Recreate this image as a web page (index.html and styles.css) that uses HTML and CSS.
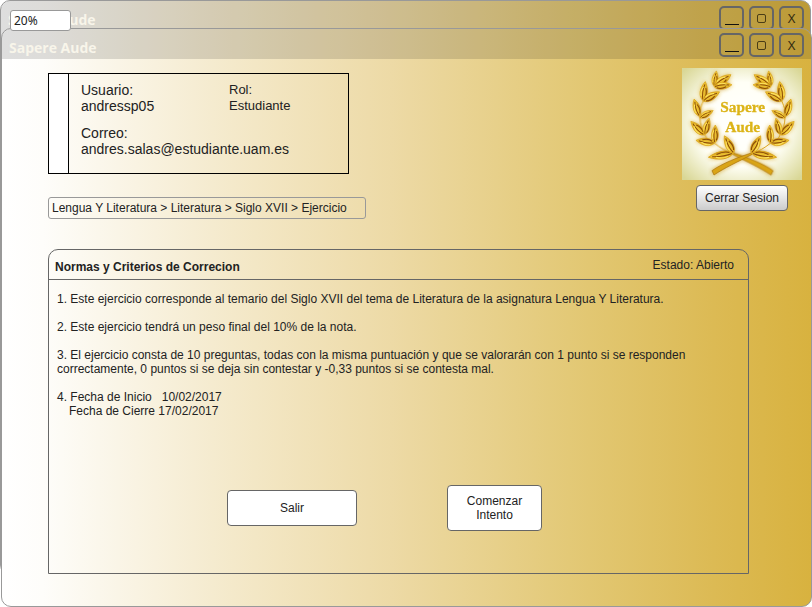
FILE: index.html
```html
<!DOCTYPE html>
<html lang="es">
<head>
<meta charset="utf-8">
<title>Sapere Aude</title>
<link rel="stylesheet" href="styles.css">
</head>
<body>
<div class="desktop">
  <div class="window window-back">
    <div class="titlebar">
      <span class="title">Sapere Aude</span>
      <div class="controls">
        <button type="button" aria-label="Minimizar"><span class="minimize"></span></button>
        <button type="button" aria-label="Maximizar"><span class="maximize"></span></button>
        <button type="button" aria-label="Cerrar">X</button>
      </div>
    </div>
  </div>

  <main class="window window-front">
    <div class="titlebar">
      <h1 class="title">Sapere Aude</h1>
      <div class="controls">
        <button type="button" aria-label="Minimizar"><span class="minimize"></span></button>
        <button type="button" aria-label="Maximizar"><span class="maximize"></span></button>
        <button type="button" aria-label="Cerrar">X</button>
      </div>
    </div>

    <div class="content">
      <header class="top">
        <div class="top-left">
          <section class="user-card">
            <div class="user-photo"></div>
            <div class="user-data">
              <p>Usuario:<br>andressp05</p>
              <p class="role">Rol:<br>Estudiante</p>
              <p class="mail">Correo:<br>andres.salas@estudiante.uam.es</p>
            </div>
          </section>
          <nav class="breadcrumb">Lengua Y Literatura &gt; Literatura &gt; Siglo XVII &gt; Ejercicio</nav>
        </div>
        <div class="top-right">
          <svg class="logo" viewBox="20 22 360 336" role="img" aria-label="Sapere Aude">
            <defs>
              <radialGradient id="glow" cx="50%" cy="50%" r="68%">
                <stop offset="0" stop-color="#ffffff"/>
                <stop offset=".55" stop-color="#fffff6"/>
                <stop offset=".8" stop-color="#eae9c0"/>
                <stop offset="1" stop-color="#d9d796"/>
              </radialGradient>
              <linearGradient id="gold" x1="0" y1="0" x2="1" y2="0">
                <stop offset="0" stop-color="#e3a916"/>
                <stop offset=".5" stop-color="#f2c936"/>
                <stop offset="1" stop-color="#c98f12"/>
              </linearGradient>
              <filter id="halo" x="-20%" y="-20%" width="140%" height="140%">
                <feGaussianBlur stdDeviation="6"/>
              </filter>
              <g id="leaf">
                <path d="M0 0C-14 -12 -14 -32 0 -54C13 -34 14 -12 0 0Z" fill="url(#gold)" stroke="#d9a31a" stroke-width="2"/>
                <path d="M0 -3C-4 -16 -4 -30 0 -46M4 -8C9 -16 8 -26 4 -36" fill="none" stroke="#8a4c08" stroke-width="3"/>
                <path d="M-6 -12C-9 -20 -8 -30 -3 -38" fill="none" stroke="#fbe364" stroke-width="3"/>
              </g>
              <g id="branch">
                <path d="M84 120C76 140 70 155 74 170C74 190 80 206 88 222C94 236 104 244 118 248C136 262 152 272 176 280" fill="none" stroke="#dba621" stroke-width="3"/>
                <path d="M172 276C215 290 262 308 293 330L287 343C258 323 215 303 174 282Z" fill="#d9a416" stroke="#a8700b" stroke-width="2"/>
                <use href="#leaf" transform="translate(116 76) rotate(9) scale(.85)"/>
                <use href="#leaf" transform="translate(118 76) rotate(55) scale(1.1)"/>
                <use href="#leaf" transform="translate(116 78) rotate(84)"/>
                <use href="#leaf" transform="translate(82 119) rotate(8) scale(1.05)"/>
                <use href="#leaf" transform="translate(83 121) rotate(61) scale(1.05)"/>
                <use href="#leaf" transform="translate(72 167) rotate(-17)"/>
                <use href="#leaf" transform="translate(73 171) rotate(62) scale(.85)"/>
                <use href="#leaf" transform="translate(86 223) rotate(-44) scale(1.05)"/>
                <use href="#leaf" transform="translate(88 222) rotate(15) scale(.95)"/>
                <use href="#leaf" transform="translate(118 247) rotate(-82) scale(1.05)"/>
                <use href="#leaf" transform="translate(118 247) rotate(2)"/>
                <use href="#leaf" transform="translate(174 278) rotate(-99) scale(1.1 1.4)"/>
                <use href="#leaf" transform="translate(175 278) rotate(-28) scale(1.1)"/>
              </g>
            </defs>
            <rect x="20" y="22" width="360" height="336" fill="url(#glow)"/>
            <g filter="url(#halo)" opacity=".8">
              <use href="#branch"/>
              <use href="#branch" transform="translate(403 0) scale(-1 1)"/>
            </g>
            <use href="#branch"/>
            <use href="#branch" transform="translate(403 0) scale(-1 1)"/>
            <text class="logo-text" x="202" y="154">Sapere</text>
            <text class="logo-text" x="202" y="215">Aude</text>
          </svg>
          <button type="button" class="logout">Cerrar Sesion</button>
        </div>
      </header>

      <section class="panel">
        <div class="panel-head">
          <h2>Normas y Criterios de Correcion</h2>
          <span class="state">Estado: Abierto</span>
        </div>
        <div class="rules">
          <p>1. Este ejercicio corresponde al temario del Siglo XVII del tema de Literatura de la asignatura Lengua Y Literatura.</p>
          <p>2. Este ejercicio tendrá un peso final del 10% de la nota.</p>
          <p>3. El ejercicio consta de 10 preguntas, todas con la misma puntuación y que se valorarán con 1 punto si se responden correctamente, 0 puntos si se deja sin contestar y -0,33 puntos si se contesta mal.</p>
          <p>4. Fecha de Inicio &nbsp; 10/02/2017<br><span class="indent">Fecha de Cierre 17/02/2017</span></p>
        </div>
        <div class="actions">
          <button type="button" class="exit">Salir</button>
          <button type="button" class="start">Comenzar<br>Intento</button>
        </div>
      </section>
    </div>
  </main>

  <input class="zoom" type="text" value="20%" aria-label="Zoom">
</div>
</body>
</html>
```
FILE: styles.css
```css
* {
  box-sizing: border-box;
}

body {
  margin: 0;
  background: #fff;
  color: #222;
  font: 12px/14px "Liberation Sans", Arial, sans-serif;
}

h1, h2, p {
  margin: 0;
}

button, input {
  font: inherit;
  color: inherit;
}

.desktop {
  position: relative;
  display: flex;
  min-height: 100vh;
  padding: 28px 0 0 1px;
}

.window {
  border: 1px solid #999;
  border-radius: 10px;
  overflow: hidden;
  background: linear-gradient(to right, #fff 0%, #fefdfa 5%, #f5ebcf 26%, #eddaa6 48%, #e3c977 70%, #dcba54 88%, #d8b23f 100%);
}

.window-back {
  position: absolute;
  inset: 0 1px 32px 0;
}

.window-front {
  position: relative;
  flex: 1;
  display: flex;
  flex-direction: column;
}

.titlebar {
  display: flex;
  align-items: center;
  justify-content: space-between;
  height: 30px;
  padding: 2px 7px 0;
  background: rgba(0, 0, 0, 0.13);
}

.window-back .titlebar {
  height: 36px;
  padding: 0 6px 2px 7px;
}

.title {
  color: #f8f5ea;
  font: bold 14px/20px "Open Sans", "Noto Sans", sans-serif;
  padding-top: 6px;
}

.window-back .title {
  padding-top: 4px;
}

.controls {
  display: flex;
  gap: 5px;
}

.controls button {
  display: flex;
  align-items: center;
  justify-content: center;
  width: 25px;
  height: 24px;
  padding: 0;
  border: 2px solid #666;
  border-radius: 5px;
  background: transparent;
  color: #332a10;
  font: 13px/16px "Noto Sans", sans-serif;
}

.minimize {
  align-self: flex-end;
  width: 14px;
  height: 1px;
  margin-bottom: 3px;
  background: #111;
}

.maximize {
  width: 9px;
  height: 9px;
  border: 1px solid #4a3d16;
  border-radius: 2px;
}

.content {
  flex: 1;
  display: flex;
  flex-direction: column;
  padding: 9px 9px 32px 46px;
}

.top {
  display: flex;
  justify-content: space-between;
}

.top-left {
  padding-top: 5px;
}

.user-card {
  display: flex;
  width: 301px;
  height: 101px;
  border: 1px solid #000;
}

.user-photo {
  width: 20px;
  border-right: 1px solid #000;
  background: #fff;
}

.user-data {
  flex: 1;
  display: grid;
  grid-template-columns: 148px 1fr;
  align-content: start;
  row-gap: 11px;
  padding: 8px 12px;
  font-size: 14px;
  line-height: 16px;
}

.role {
  font-size: 13px;
}

.mail {
  grid-column: 1 / -1;
}

.breadcrumb {
  width: 318px;
  margin-top: 23px;
  padding: 3px;
  border: 1px solid #999;
  border-radius: 3px;
}

.top-right {
  display: flex;
  flex-direction: column;
  align-items: center;
  gap: 5px;
}

.logo {
  width: 120px;
  height: 112px;
}

.logo-text {
  fill: #dcb418;
  stroke: #dcb418;
  stroke-width: 1px;
  font: bold 46px "Liberation Serif", serif;
  text-anchor: middle;
}

.logout {
  width: 92px;
  height: 26px;
  padding: 0;
  border: 1px solid #666;
  border-radius: 4px;
  background: linear-gradient(#fff, #ccc);
}

.panel {
  flex: 1;
  display: flex;
  flex-direction: column;
  margin: 30px 53px 0 0;
  border: 1px solid #666;
  border-radius: 10px 10px 0 0;
}

.panel-head {
  display: flex;
  justify-content: space-between;
  height: 30px;
  padding: 10px 14px 0 6px;
  border-bottom: 1px solid #666;
}

.panel-head h2 {
  font-size: 12px;
  line-height: 14px;
}

.state {
  line-height: 10px;
}

.rules {
  display: flex;
  flex-direction: column;
  gap: 14px;
  padding: 12px 40px 0 8px;
}

.indent {
  padding-left: 12px;
}

.actions {
  display: flex;
  align-items: center;
  gap: 90px;
  margin: auto 0 42px 178px;
}

.actions button {
  padding: 0;
  border: 1px solid #666;
  border-radius: 4px;
  background: #fff;
}

.exit {
  width: 130px;
  height: 36px;
}

.start {
  width: 95px;
  height: 46px;
}

.zoom {
  position: absolute;
  top: 10px;
  left: 10px;
  width: 61px;
  height: 21px;
  padding: 0 3px;
  border: 1px solid #999;
  border-radius: 3px;
  background: #fff;
  font: 12px/16px "Noto Sans", sans-serif;
}
```
